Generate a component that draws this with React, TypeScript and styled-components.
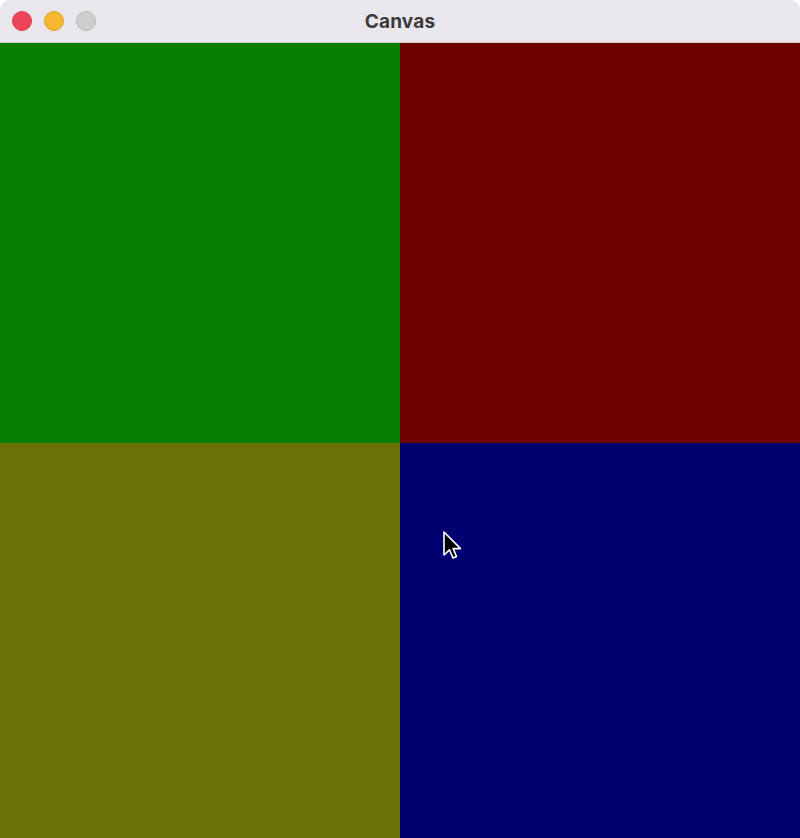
import React from 'react'
import styled, { createGlobalStyle } from 'styled-components'

const GlobalStyle = createGlobalStyle`
  html, body {
    margin: 0;
    padding: 0;
    background: #ffffff;
  }
  body {
    font-family: Inter, "Liberation Sans", Arial, sans-serif;
  }
`

const Window = styled.div`
  width: 800px;
  height: 838px;
  display: flex;
  flex-direction: column;
  border-top-left-radius: 10px;
  border-top-right-radius: 10px;
  overflow: hidden;
  background: #e9e7eb;
`

const TitleBar = styled.div`
  position: relative;
  height: 42px;
  flex: 0 0 42px;
  display: flex;
  align-items: center;
  justify-content: center;
  background: #e9e7eb;
  border-bottom: 1px solid #d2d0d4;
`

const Lights = styled.div`
  position: absolute;
  left: 12px;
  top: 11px;
  display: flex;
  gap: 12px;
`

const Light = styled.div<{ color: string; ring: string }>`
  width: 20px;
  height: 20px;
  border-radius: 50%;
  box-sizing: border-box;
  background: ${({ color }) => color};
  border: 1px solid ${({ ring }) => ring};
`

const Title = styled.div`
  font-size: 19px;
  font-weight: 700;
  color: #3b3a3c;
  letter-spacing: 0.2px;
`

const Canvas = styled.div`
  position: relative;
  flex: 1;
  display: grid;
  grid-template-columns: 400px 400px;
  grid-template-rows: 400px 395px;
`

const Quad = styled.div<{ color: string }>`
  background: ${({ color }) => color};
`

const Cursor = styled.svg`
  position: absolute;
  left: 442px;
  top: 488px;
`

export default function App() {
  return (
    <>
      <GlobalStyle />
      <Window>
        <TitleBar>
          <Lights>
            <Light color="#ee4658" ring="#d43a4b" />
            <Light color="#f6b731" ring="#dea12a" />
            <Light color="#cecdd0" ring="#b9b8bb" />
          </Lights>
          <Title>Canvas</Title>
        </TitleBar>
        <Canvas>
          <Quad color="#077f01" />
          <Quad color="#6e0000" />
          <Quad color="#6c7105" />
          <Quad color="#000070" />
          <Cursor width="22" height="32" viewBox="0 0 22 32">
            <path
              d="M2 1 L2 24 L7.5 18.8 L11 27 L14.5 25.5 L11.2 17.6 L18.5 17.6 Z"
              fill="#000"
              stroke="#fff"
              strokeWidth="1.6"
              strokeLinejoin="round"
            />
          </Cursor>
        </Canvas>
      </Window>
    </>
  )
}
